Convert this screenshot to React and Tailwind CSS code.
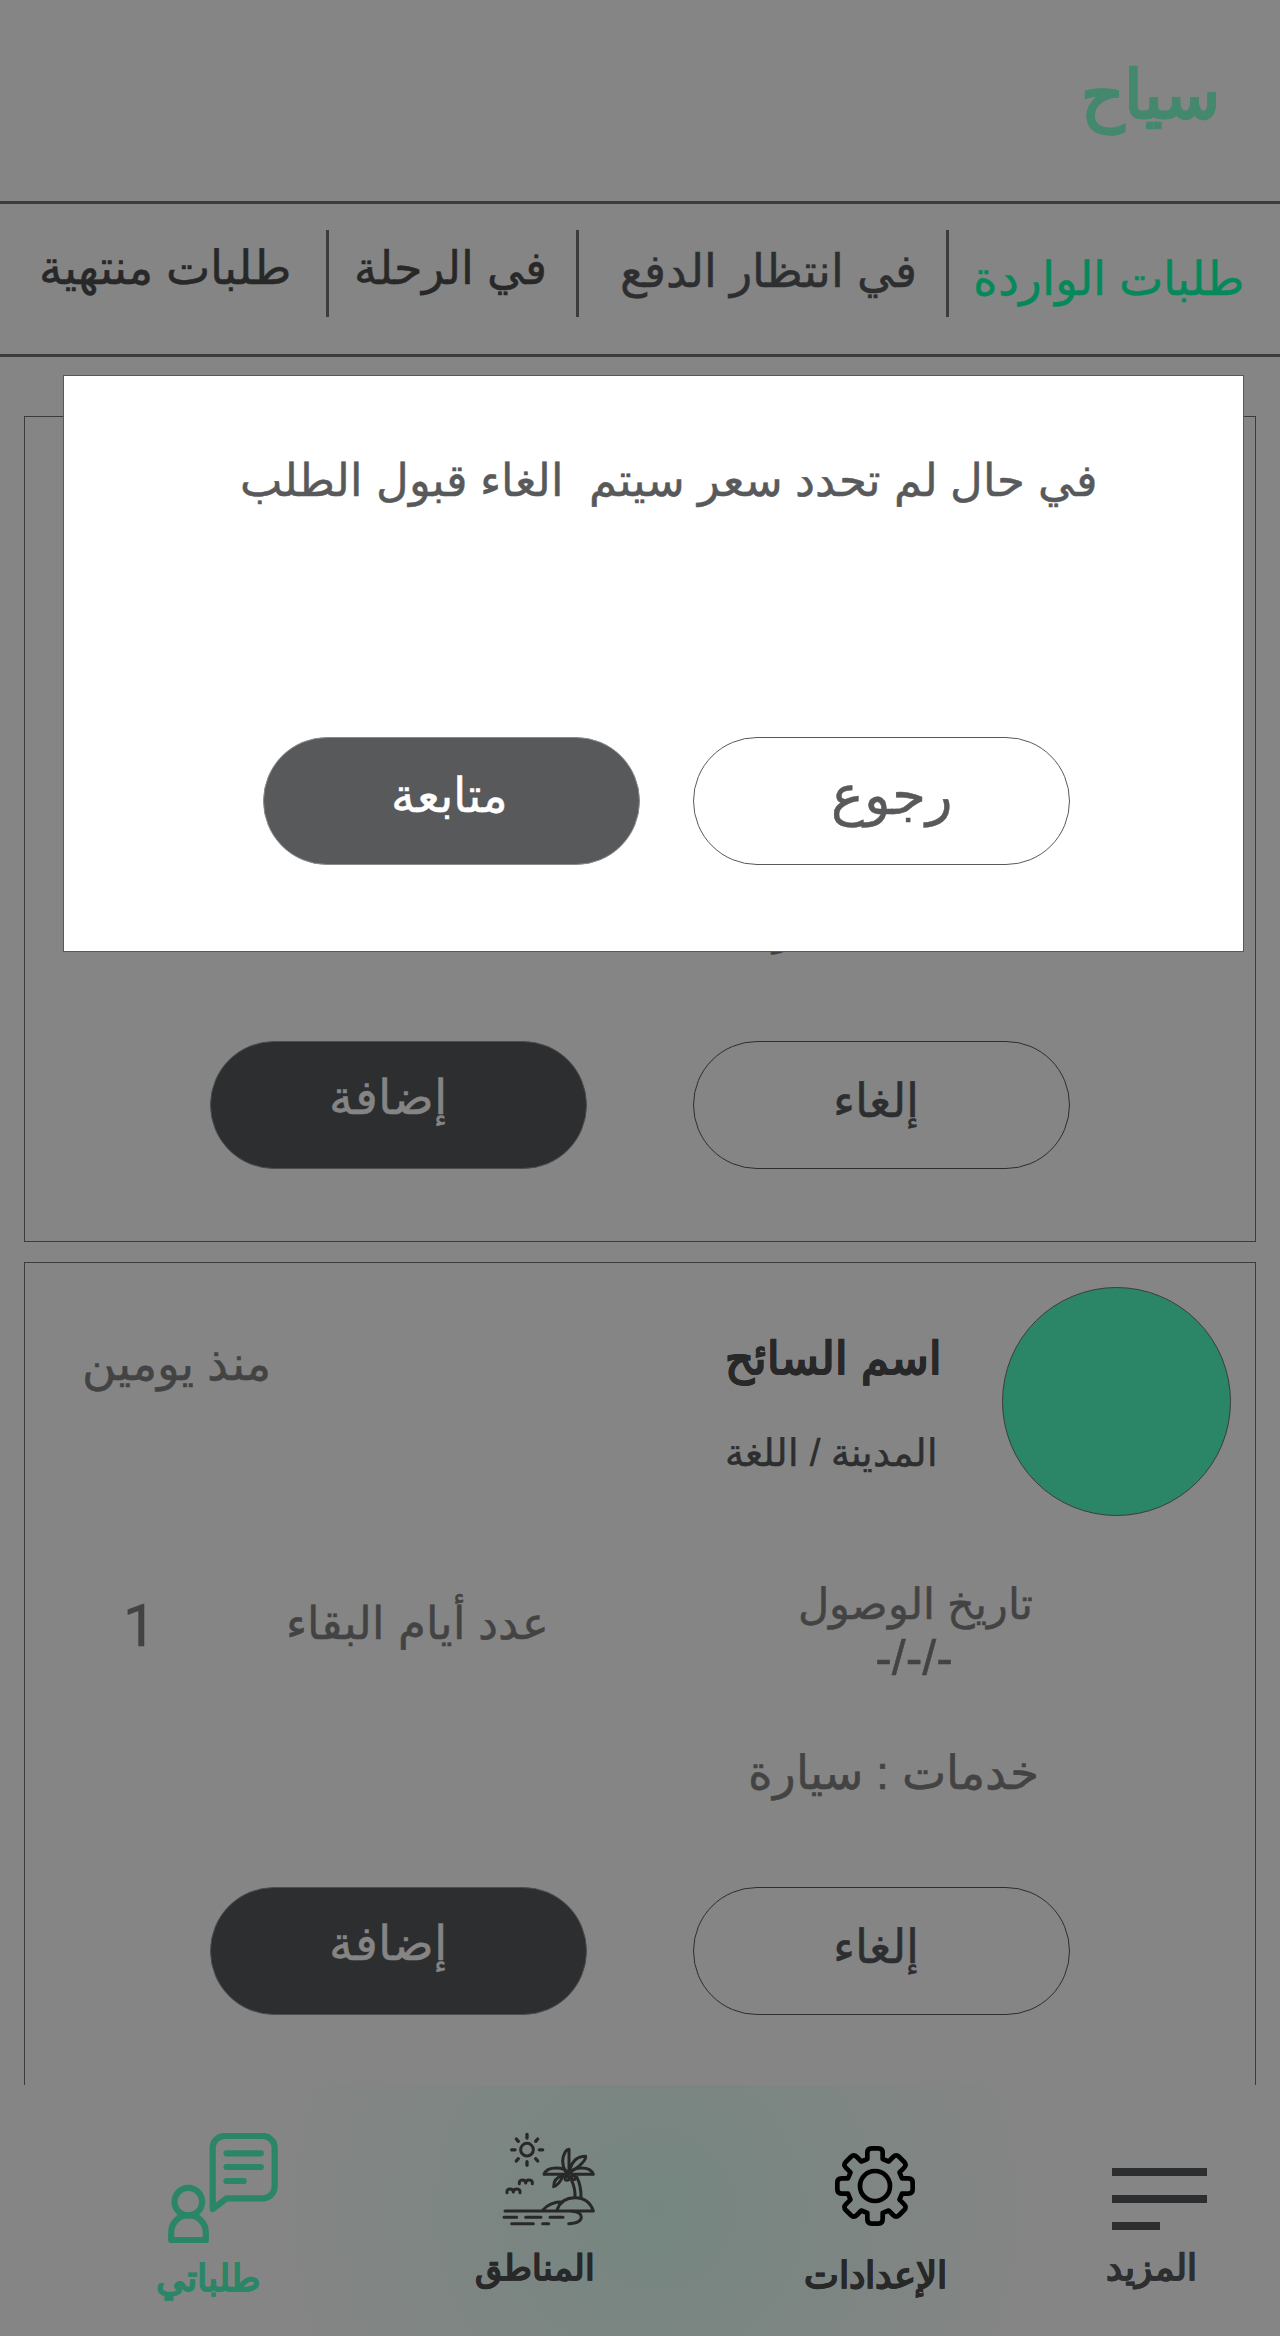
const gearPath = (() => {
  const tooth = [
    ["L", -23, -81],
    ["L", -23, -100],
    ["Q", -23, -113, -10, -113],
    ["L", 10, -113],
    ["Q", 23, -113, 23, -100],
    ["L", 23, -81],
  ];
  let d = "";
  for (let i = 0; i < 8; i++) {
    const a = (i * Math.PI) / 4;
    const c = Math.cos(a);
    const s = Math.sin(a);
    for (const [cmd, ...n] of tooth) {
      const pts = [];
      for (let k = 0; k < n.length; k += 2) {
        pts.push((n[k] * c - n[k + 1] * s).toFixed(1), (n[k] * s + n[k + 1] * c).toFixed(1));
      }
      d += (d === "" ? "M" : cmd) + pts.join(" ");
    }
  }
  return d + "Z";
})();

function ChatIcon() {
  return (
    <svg className="h-[111px] w-[111px]" viewBox="0 0 111 111" fill="none" stroke="#2b8667" strokeWidth="6.2" strokeLinejoin="round" strokeLinecap="round">
      <path d="M44.7 76V15a12 12 0 0 1 12-12H94.7a12 12 0 0 1 12 12V53.3a12 12 0 0 1-12 12H58.7Z" />
      <path d="M58.5 20.3H92.8M58.5 34H92.8M58.5 48H75.7" />
      <circle cx="20.3" cy="68.7" r="13.8" />
      <path d="M3.2 107V99.500a17.300 17.300 0 0 1 34.600 0V107Z" />
    </svg>
  );
}

function IslandIcon() {
  return (
    <svg className="h-[100px] w-[100px]" viewBox="58 60 300 300" fill="none" stroke="#282828" strokeWidth="9" strokeLinejoin="round" strokeLinecap="round">
      <circle cx="142" cy="119" r="19" />
      <path strokeWidth="10" d="M142 73V84M142 155V166M96 119.500H106M179 119.500H189M110 87L116 94M174 87L168 94M110 153L116 146M174 153L168 146" />
      <path d="M119 221V217q1-7 10-7q8 0 9 9q1-9 10-9q9 0 10 7V221M82 248V244q1-7 10-7q8 0 9 9q1-9 10-9q9 0 10 7V248" />
      <path d="M193 193Q200 174 230 174Q254 174 266 188M193 193H341M341 193Q334 174 306 174Q282 174 269 188" />
      <path d="M257 184Q241 152 257 125Q262 118 268 118V182M270 182Q280 139 318 139Q319 156 276 184M250 196Q222 203 222 230Q238 225 250 198" />
      <circle cx="262" cy="205" r="6" />
      <circle cx="281" cy="203" r="6" />
      <path d="M276 212Q287 235 286 261M292 202Q305 230 304 263" />
      <path d="M232 300Q245 263 286 263Q327 263 341 302M190 300Q210 275 250 275M76 303H341" />
      <path d="M73 322H111M138 322H184M211 322H250M96 341H161M189 341H207M278 304Q305 306 305 322Q303 340 267 341" />
    </svg>
  );
}

function GearIcon() {
  return (
    <svg className="h-[82px] w-[82px]" viewBox="-123 -123 246 246" fill="none" stroke="#000" strokeWidth="14" strokeLinejoin="round">
      <path d={gearPath} />
      <circle r="45" />
    </svg>
  );
}

function MoreIcon() {
  return (
    <div className="flex flex-col gap-[19px] pr-[2px]">
      <div className="h-2 w-[95px] bg-[#2d2e30]" />
      <div className="h-2 w-[95px] bg-[#2d2e30]" />
      <div className="h-2 w-12 bg-[#2d2e30]" />
    </div>
  );
}

const pill = "flex h-32 w-[377px] justify-center rounded-full border-[1.500px] whitespace-nowrap";

function CardActions() {
  return (
    <div className="flex pl-[185px]">
      <button className={pill + " border-[#4c4d4e] bg-[#2d2e30] pt-[26px] pr-[22px] text-[48px]/[60px] text-[#858585]"}>
        إضافة
      </button>
      <button className={pill + " ml-[106px] border-[#2d2e30] pt-[29px] pr-3 text-[46.500px]/[60px] text-[#2d2e30]"}>
        إلغاء
      </button>
    </div>
  );
}

function Services() {
  return (
    <p dir="rtl" className="w-[289px] text-center text-[46.800px]/[60px] whitespace-nowrap text-[#434343]">
      خدمات : سيارة
    </p>
  );
}

function CoveredCard() {
  return (
    <section className="flex h-[826px] flex-col border-[1.500px] border-[#3c3c3c] pt-[480px]">
      <div className="flex h-36 pl-[725px]">
        <Services />
      </div>
      <CardActions />
    </section>
  );
}

function RequestCard() {
  return (
    <section className="mt-5 h-[823px] border-[1.500px] border-b-0 border-[#3c3c3c]">
      <div className="flex h-[290px] pt-6">
        <p dir="rtl" className="mt-[47px] ml-[59px] w-[187px] text-[46.500px]/[60px] whitespace-nowrap text-[#434343]">
          منذ يومين
        </p>
        <div dir="rtl" className="ml-[454px] flex w-[217px] flex-col whitespace-nowrap">
          <h2 className="mt-[42px] text-[45px]/[60px] font-bold text-[#282828]">اسم السائح</h2>
          <p className="mt-[34px] pr-1 text-[38.300px]/[60px] text-[#2d2e30]">المدينة / اللغة</p>
        </div>
        <div className="ml-[60px] size-[229px] rounded-full border-[1.500px] border-[#3c3c3c] bg-[#2b8667]" />
      </div>
      <div className="flex h-[190px] text-[#434343]">
        <p className="mt-[43px] ml-[98px] w-8 font-['Roboto',sans-serif] text-[59px]/[60px]">1</p>
        <p dir="rtl" className="mt-[41px] ml-[137px] w-[257px] text-center text-[44.500px]/[60px] whitespace-nowrap">
          عدد أيام البقاء
        </p>
        <div className="ml-[251px] flex w-[231px] flex-col items-center whitespace-nowrap">
          <p dir="rtl" className="mt-[22px] text-[42.500px]/[60px]">تاريخ الوصول</p>
          <p className="-mt-[7px] pr-[3px] text-[50px]/[60px]">-/-/-</p>
        </div>
      </div>
      <div className="flex h-36 pl-[725px]">
        <Services />
      </div>
      <CardActions />
    </section>
  );
}

function NavItem({ icon, label, className, labelClass }) {
  return (
    <div className={"flex w-40 flex-col items-center " + className}>
      <div className="flex h-[120px] flex-col items-center">{icon}</div>
      <span dir="rtl" className={"leading-[48px] font-bold whitespace-nowrap " + labelClass}>{label}</span>
    </div>
  );
}

function ConfirmDialog() {
  return (
    <div className="absolute top-[375px] left-[63px] h-[577px] w-[1181px] border-[1.500px] border-[#58595b] bg-white">
      <p dir="rtl" className="mt-[75px] mr-[145px] text-[45.200px]/[60px] whitespace-pre text-[#58595b]">
        {"في حال لم تحدد سعر سيتم  الغاء قبول الطلب"}
      </p>
      <div className="mt-[226px] flex pl-[199px]">
        <button className={pill + " border-[#8a8b8c] bg-[#58595b] pt-[28px] pr-[5px] text-[48px]/[60px] text-white"}>
          متابعة
        </button>
        <button className={pill + " ml-[53px] border-[#58595b] pt-[27px] pl-5 text-[55px]/[60px] text-[#58595b]"}>
          رجوع
        </button>
      </div>
    </div>
  );
}

export default function App() {
  return (
    <div className="relative flex h-[2336px] w-[1280px] flex-col overflow-hidden bg-[#858585] font-['Liberation_Sans',sans-serif] [-webkit-text-stroke:0.5px_currentColor]">
      <header dir="rtl" className="h-[204px] border-b-[3px] border-[#3c3c3c] pt-[55px] pr-[60px]">
        <h1 className="text-[67px]/[80px] font-bold text-[#44886e]">سياح</h1>
      </header>
      <nav className="flex h-[153px] border-b-[3px] border-[#3c3c3c] text-center text-[46px]/[60px] whitespace-nowrap text-[#282828]">
        <div dir="rtl" className="w-[326px] pt-[34px] pl-1 text-[47px]">طلبات منتهية</div>
        <div className="mt-[26px] h-[87px] w-[3px] bg-[#3c3c3c]" />
        <div dir="rtl" className="w-[247px] pt-[34px] pr-1">في الرحلة</div>
        <div className="mt-[26px] h-[87px] w-[3px] bg-[#3c3c3c]" />
        <div dir="rtl" className="w-[367px] pt-[37px] pl-3 text-[#2d2e30]">في انتظار الدفع</div>
        <div className="mt-[26px] h-[87px] w-[3px] bg-[#3c3c3c]" />
        <div dir="rtl" className="w-[331px] pt-[45px] pr-3 text-[46.500px] text-[#05895b]">طلبات الواردة</div>
      </nav>
      <main className="h-[1728px] shrink-0 px-6 pt-[59px]">
        <CoveredCard />
        <RequestCard />
      </main>
      <footer className="flex h-[251px] shrink-0 bg-[radial-gradient(circle_390px_at_655px_125px,#758680,#858585)] pl-[143px] text-[#282828]">
        <NavItem icon={<ChatIcon />} label="طلباتي" className="pt-12" labelClass="mt-[2px] pr-[30px] text-[36.500px] text-[#2b8667]" />
        <NavItem icon={<IslandIcon />} label="المناطق" className="ml-[166px] pt-[45px]" labelClass="-mt-[6px] pr-[29px] text-[34.700px]" />
        <NavItem icon={<GearIcon />} label="الإعدادات" className="ml-[166px] pt-[60px]" labelClass="-mt-[13px] text-[36.800px]" />
        <NavItem icon={<MoreIcon />} label="المزيد" className="ml-[125px] pt-[83px]" labelClass="-mt-[44px] pr-[18px] text-[35.600px] text-[#2d2e30]" />
      </footer>
      <ConfirmDialog />
    </div>
  );
}
